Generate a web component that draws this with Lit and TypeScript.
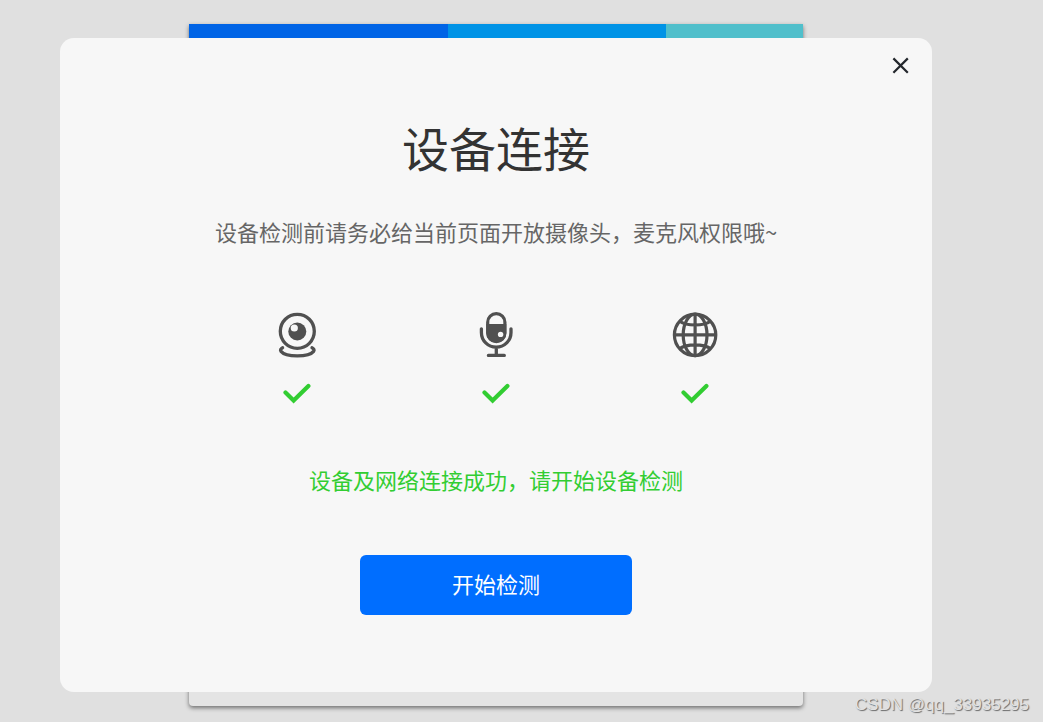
import { LitElement, html, css, svg } from "lit";
import { customElement, state } from "lit/decorators.js";

const webcam = svg`
  <circle cx="24.3" cy="20.3" r="17" fill="none" stroke="#505050" stroke-width="3.3"/>
  <circle cx="24.3" cy="20.5" r="9" fill="#505050"/>
  <circle cx="21.3" cy="17" r="3.6" fill="#f7f7f7"/>
  <path d="M9.6 36.8C7.6 37.8 7 39.2 8 40.4C10.4 43.4 17 44.9 24.3 44.9S38.2 43.4 40.6 40.4C41.6 39.2 41 37.8 39 36.8" fill="none" stroke="#505050" stroke-width="3.3" stroke-linecap="round"/>`;

const microphone = svg`
  <rect x="15.7" y="2.7" width="17.2" height="28" rx="8.6" fill="none" stroke="#505050" stroke-width="3.2"/>
  <path d="M14.3 13H34.3V22A10 10 0 0 1 14.3 22Z" fill="#505050"/>
  <circle cx="28.6" cy="23.4" r="2.7" fill="#f7f7f7"/>
  <path d="M9.4 17.8V21.4A14.8 14.8 0 0 0 39 21.4V17.8M24.3 36.4V44.2M16.4 44.4H32.3" fill="none" stroke="#505050" stroke-width="3.3" stroke-linecap="round"/>`;

const globe = svg`
  <g fill="none" stroke="#505050" stroke-width="3.2">
    <circle cx="24.1" cy="23.9" r="20.7"/>
    <ellipse cx="24.1" cy="23.9" rx="11.9" ry="20.7"/>
    <path d="M24.1 3V45M3.5 23.9H45M8.6 10.2C12.6 13 18 14 24.1 14S35.6 13 39.6 10.2M8.6 37.6C12.6 34.8 18 33.8 24.1 33.8S35.6 34.8 39.6 37.6"/>
  </g>`;

@customElement("app-root")
export class AppRoot extends LitElement {
  @state() private open = true;

  private devices = [
    { name: "摄像头", icon: webcam },
    { name: "麦克风", icon: microphone },
    { name: "网络", icon: globe },
  ];

  static styles = css`
    :host {
      display: block;
      font-family: "Noto Sans", "Noto Sans CJK SC", sans-serif;
    }
    * {
      box-sizing: border-box;
    }
    .stage {
      position: relative;
      display: grid;
      justify-items: center;
      min-height: 100vh;
      padding: 24px 51px 16px 0;
      background: #e0e0e0;
    }
    .card,
    .dialog {
      grid-area: 1 / 1;
      width: 100%;
    }
    .card {
      max-width: 614px;
      background: #e4e4e4;
      border-radius: 0 0 4px 4px;
      box-shadow: 0 2px 4px rgba(0, 0, 0, 0.5);
    }
    .bands {
      display: grid;
      grid-template-columns: 259fr 218fr 137fr;
      height: 60px;
    }
    .band-a {
      background: #0064e6;
    }
    .band-b {
      background: #0093e6;
    }
    .band-c {
      background: #50bfcb;
    }
    .dialog {
      position: relative;
      display: flex;
      flex-direction: column;
      align-items: center;
      max-width: 872px;
      margin: 14px 0;
      padding: 79px 24px 77px;
      background: #f7f7f7;
      border-radius: 14px;
      font-family: "Noto Sans CJK SC", sans-serif;
      text-align: center;
    }
    .close {
      position: absolute;
      top: 16px;
      right: 20px;
      display: flex;
      padding: 0;
      border: 0;
      background: none;
      cursor: pointer;
    }
    h1 {
      margin: 0;
      font-size: 47px;
      font-weight: 400;
      line-height: 60px;
      color: #333;
    }
    p {
      margin: 0;
      font-size: 22px;
      line-height: 32px;
    }
    .hint {
      margin-top: 38px;
      color: #666;
    }
    .devices {
      display: grid;
      grid-template-columns: repeat(3, 1fr);
      width: 100%;
      max-width: 597px;
      margin: 64px 0 0;
      padding: 0;
      list-style: none;
    }
    .device {
      display: flex;
      flex-direction: column;
      align-items: center;
      gap: 24px;
    }
    .status {
      margin-top: 58px;
      color: #32cd32;
    }
    .start {
      width: 272px;
      max-width: 100%;
      height: 60px;
      margin-top: 60px;
      padding: 0 0 4px;
      border: 0;
      border-radius: 6px;
      background: #006eff;
      color: #fff;
      font: 400 22px/32px "Noto Sans CJK SC", sans-serif;
      cursor: pointer;
    }
    .mark {
      position: absolute;
      right: 14px;
      bottom: 7px;
      font: 17px/20px "Liberation Sans", sans-serif;
      color: #e2e2e2;
      text-shadow: 1px 1px 1px #666;
    }
  `;

  render() {
    return html`
      <main class="stage">
        <div class="card">
          <div class="bands">
            <div class="band-a"></div>
            <div class="band-b"></div>
            <div class="band-c"></div>
          </div>
        </div>
        ${this.open
          ? html`<section class="dialog" role="dialog" aria-labelledby="title">
              <button class="close" aria-label="关闭" @click=${() => (this.open = false)}>
                <svg width="24" height="24" viewBox="0 0 24 24" fill="none" stroke="#23272c" stroke-width="2.2">
                  <path d="M5.4 4.4L19.8 18.8M19.8 4.4L5.4 18.8" />
                </svg>
              </button>
              <h1 id="title">设备连接</h1>
              <p class="hint">设备检测前请务必给当前页面开放摄像头，麦克风权限哦~</p>
              <ul class="devices">
                ${this.devices.map(
                  (d) => html`<li class="device">
                    <svg width="48" height="48" viewBox="0 0 48 48" role="img" aria-label=${d.name}>${d.icon}</svg>
                    <svg width="28" height="22" viewBox="0 0 28 22" aria-hidden="true">
                      <path d="M2.5 9.5L10.6 17.6L25.4 3" fill="none" stroke="#32cd32" stroke-width="4.2" stroke-linecap="round" stroke-linejoin="miter" />
                    </svg>
                  </li>`
                )}
              </ul>
              <p class="status">设备及网络连接成功，请开始设备检测</p>
              <button class="start">开始检测</button>
            </section>`
          : ""}
        <span class="mark">CSDN @qq_33935295</span>
      </main>
    `;
  }
}
